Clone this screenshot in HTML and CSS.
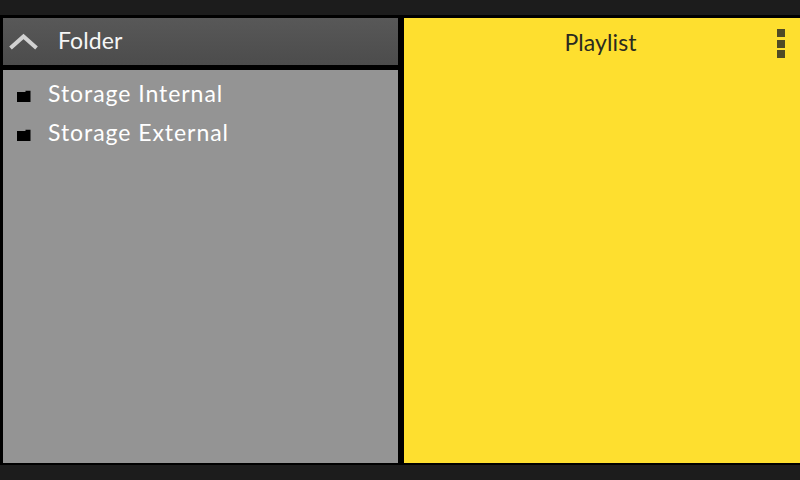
FILE: index.html
```html
<!DOCTYPE html>
<html lang="en">
<head>
<meta charset="utf-8">
<title>Player</title>
<link rel="stylesheet" href="styles.css">
</head>
<body>
<div class="app">
  <div class="bar"></div>
  <main class="panes">
    <section class="left">
      <header class="folder-head">
        <svg class="chevron" width="30" height="18" viewBox="0 0 30 18"><path d="M1.5 15 L14.5 3.5 L27.5 15" fill="none" stroke="#d2d2d2" stroke-width="4"/></svg>
        <span class="folder-title">Folder</span>
      </header>
      <ul class="list">
        <li class="row">
          <svg class="folder" width="14" height="12" viewBox="0 0 14 12"><path d="M0 2H8.5V0.7H13.5V12H0Z" fill="#000"/></svg>
          <span>Storage Internal</span>
        </li>
        <li class="row">
          <svg class="folder" width="14" height="12" viewBox="0 0 14 12"><path d="M0 2H8.5V0.7H13.5V12H0Z" fill="#000"/></svg>
          <span>Storage External</span>
        </li>
      </ul>
    </section>
    <section class="right">
      <header class="play-head">
        <span class="play-title">Playlist</span>
        <div class="menu"><i></i><i></i><i></i></div>
      </header>
    </section>
  </main>
  <div class="bar"></div>
</div>
</body>
</html>
```
FILE: styles.css
```css
* { box-sizing: border-box; }
html, body { margin: 0; padding: 0; }
body { width: 800px; height: 480px; overflow: hidden; background: #000; font-family: "Lato", "Liberation Sans", sans-serif; }
.app { display: flex; flex-direction: column; height: 480px; }
.bar { height: 15px; background: #1c1c1c; flex: none; }
.panes { flex: 1; display: flex; gap: 6px; padding: 3px 0 2px 3px; min-height: 0; }
.left { width: 395px; display: flex; flex-direction: column; gap: 5px; }
.folder-head { height: 47px; flex: none; display: flex; align-items: center; background: linear-gradient(#585858, #4c4c4c); padding-left: 6px; }
.chevron { flex: none; }
.folder-title { margin-left: 19px; margin-bottom: 3px; color: #f6f6f6; font-size: 23px; font-weight: 400; letter-spacing: 0.1px; }
.list { flex: 1; margin: 0; padding: 5px 0 0 13px; list-style: none; background: #949494; }
.row { height: 39px; display: flex; align-items: center; color: #fff; font-size: 23px; font-weight: 400; letter-spacing: 0.95px; }
.row span { margin-top: -3px; }
.folder { flex: none; margin: 2px 17px 0 1px; }
.right { flex: 1; background: #fedf2f; }
.play-head { display: flex; align-items: flex-start; height: 47px; padding-right: 15px; }
.play-title { flex: 1; margin-top: 10px; padding-left: 20px; text-align: center; color: #2a2a20; font-size: 23px; font-weight: 400; letter-spacing: 0.1px; }
.menu { display: flex; flex-direction: column; gap: 2.5px; margin-top: 11px; }
.menu i { display: block; width: 8px; height: 8px; background: #4f4a25; }
```
